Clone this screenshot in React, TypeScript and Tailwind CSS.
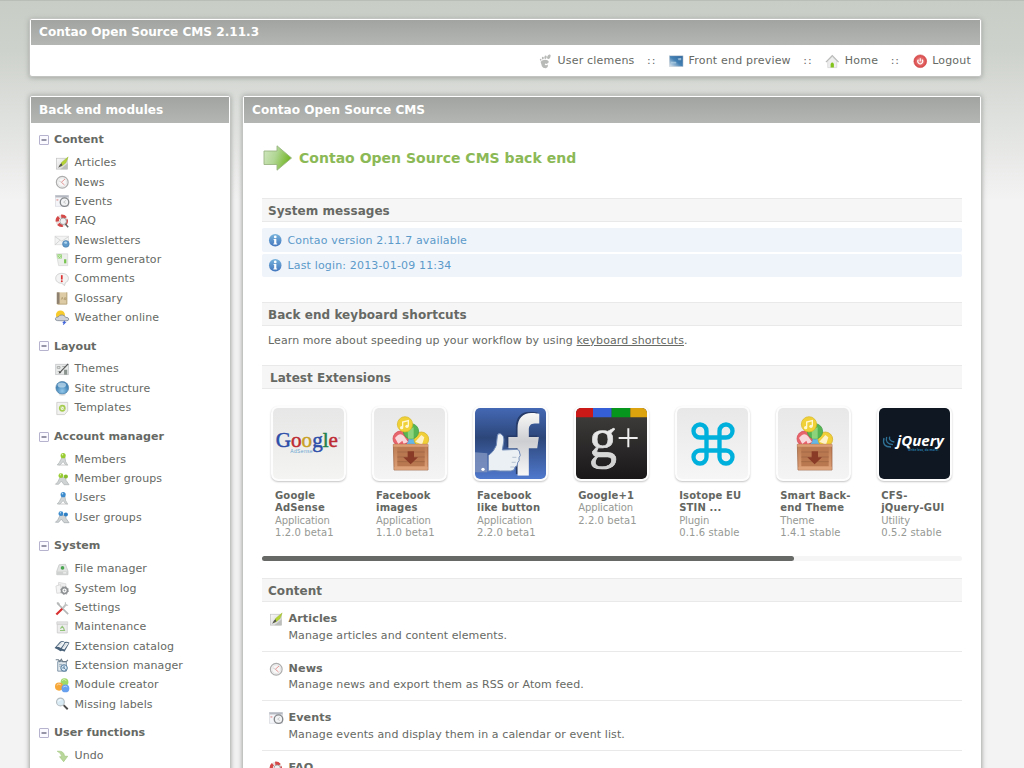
import type { ReactNode } from 'react';
import { FaFacebookF } from 'react-icons/fa';
import { Command } from 'lucide-react';

const icons: Record<string, ReactNode> = {
  articles: (
    <>
      <rect x="1.5" y="2.5" width="12" height="12" fill="url(#paper)" stroke="#c2c4c2" strokeWidth=".8" />
      <path d="M6 14.500 14 14.500 14 8z" fill="#bcbebc" />
      <path d="M5 11.500 7.500 7 14.500 1 12 7.500 7.500 11z" fill="#b5d334" stroke="#96b52c" strokeWidth=".5" />
      <path d="M3.500 13 5.500 9.500 7.500 8 8 10.500z" fill="#555" />
    </>
  ),
  news: (
    <>
      <circle cx="8" cy="8" r="6.500" fill="#f7f7f7" stroke="#adadad" strokeWidth="1.300" />
      <circle cx="8" cy="8" r="4.800" fill="none" stroke="#dedede" strokeWidth=".8" />
      <path d="M11 4.500 7 8 10.500 11" fill="none" stroke="#e58b8b" strokeWidth="1" />
      <path d="M4.500 6.500 7 8" stroke="#ccc" />
    </>
  ),
  events: (
    <>
      <rect x=".5" y="1.500" width="14.500" height="12" fill="#f4f5f8" stroke="#d3d6dc" strokeWidth=".7" />
      <path d="M.5 1.500h14.500v2.300H.5z" fill="#b5b9c1" />
      <path d="M2.500 5.500v2M4 6.500H1.500" stroke="#e3a9a9" />
      <circle cx="10.500" cy="9" r="4.700" fill="#f2f3f4" stroke="#85888b" strokeWidth="1.500" />
      <path d="M12 7 9.500 9 12 10.500" fill="none" stroke="#bbb" strokeWidth=".8" />
    </>
  ),
  faq: (
    <>
      <circle cx="7.500" cy="7.500" r="5" fill="none" stroke="#e9dfdf" strokeWidth="3.600" />
      <circle cx="7.500" cy="7.500" r="5" fill="none" stroke="#d54848" strokeWidth="3.600" strokeDasharray="5 2.854" strokeDashoffset="-1.400" transform="rotate(-30 7.500 7.500)" />
      <circle cx="9" cy="8" r="3.600" fill="#eef0f1" stroke="#999" strokeWidth=".9" />
      <path d="m11.500 11 3 3.700" stroke="#666" strokeWidth="1.700" />
    </>
  ),
  newsletters: (
    <>
      <rect x="0" y="3.500" width="15" height="9.500" fill="#f3f3f3" stroke="#dadada" strokeWidth=".8" />
      <path d="m0 4 7.500 5 7.500-5M0 13l5.500-5" fill="none" stroke="#c9cbcb" strokeWidth=".8" />
      <circle cx="12" cy="12" r="3.700" fill="#5f9acb" stroke="#4479a8" strokeWidth=".6" />
      <path d="M9.500 11q2-2.500 4-.8l-1 2z" fill="#b5d7ee" />
    </>
  ),
  form: (
    <>
      <path d="M1.500 2h12.500v13H4z" fill="#eceeec" stroke="#cfd1cf" strokeWidth=".7" />
      <path d="M2.500 2.500h5v4.800h-4.500z" fill="#8fd16e" />
      <path d="m3.500 3 3 3.500M6.500 3 3.500 6.500" stroke="#d6efc9" />
      <path d="M10 8h2.500v4.500h-2.500z" fill="#78c552" />
    </>
  ),
  comments: (
    <>
      <path d="M7.500 1.500C3 1.500.8 4 .8 7c0 3.300 2.800 5.500 6.700 5.500l3 2.500.8-3c2.200-1 3.500-2.600 3.500-5 0-3-2.800-5.500-7.300-5.500z" fill="#f3f3f3" stroke="#c9c9c9" strokeWidth=".9" />
      <path d="M7.500 3.500v4.800" stroke="#d33" strokeWidth="1.900" />
      <circle cx="7.500" cy="10.300" r="1.100" fill="#d33" />
    </>
  ),
  glossary: (
    <>
      <path d="M2 1.500h11.500v13H2z" fill="#dccba5" />
      <path d="M2 1.500h3v13H2z" fill="#8f8170" />
      <path d="M13 1.500v13H3" fill="none" stroke="#b6a37b" />
      <path d="m7 9.500 1-2.500 1 2.500M10.500 7.500h1.500v2h-1.500z" fill="none" stroke="#a78f61" strokeWidth=".7" />
    </>
  ),
  weather: (
    <>
      <circle cx="6" cy="5.500" r="5" fill="#f8cb2d" />
      <path d="M2.500 11.700Q0 11.500.5 9.300 1 7.500 3.500 7.700 5 5 8 5.500q3 .2 3.500 2.500 3.700 0 3.700 2 0 2-3 2z" fill="#cfd2d8" stroke="#7f8794" strokeWidth=".9" />
      <path d="m11 12-1.700 1.800h1.900L9 16" fill="none" stroke="#4669da" strokeWidth="1.200" />
    </>
  ),
  themes: (
    <>
      <rect x=".8" y="2.500" width="14" height="11.500" fill="#e8eaea" stroke="#c0c3c4" strokeWidth=".8" />
      <path d="M2.500 5h3v2h-3zM3 10.500h4M8 5h3" stroke="#999" strokeWidth=".8" fill="none" />
      <path d="m6 11 8.500-9" stroke="#555" strokeWidth="1.300" />
      <path d="m5 10 2 2-3 .8z" fill="#444" />
      <path d="M10 8.500h3.500V14H10z" fill="#8b938e" />
    </>
  ),
  site: (
    <>
      <circle cx="8" cy="7.500" r="7" fill="url(#globe)" stroke="#4f81a8" strokeWidth=".8" />
      <ellipse cx="7.500" cy="4.500" rx="4.700" ry="2.800" fill="#d2e8f5" opacity=".65" />
      <ellipse cx="8" cy="15.300" rx="4" ry=".6" fill="#ccc" />
    </>
  ),
  templates: (
    <>
      <path d="M2 1.500h12v9.500L10.500 15H2z" fill="#f1f2f0" stroke="#cbccca" strokeWidth=".9" />
      <circle cx="8" cy="8" r="2.800" fill="none" stroke="#a6cc4f" strokeWidth="1.900" />
      <path d="m5 6 6 4" stroke="#c4de82" />
    </>
  ),
  member: (
    <>
      <ellipse cx="8" cy="14.300" rx="6" ry=".8" fill="#ddd" />
      <path d="M8 5.500 4.500 12l-2 2 3 .3L9 10.500l2.500 3.500 2.500.5-2.300-4-.9-5z" fill="#d3d6d6" stroke="#b0b4b4" strokeWidth=".8" />
      <circle cx="9" cy="4" r="2.800" fill="#98cc31" />
      <circle cx="8.300" cy="2.900" r=".9" fill="#e1f3b5" />
    </>
  ),
  members: (
    <>
      <path d="M5.500 6 3 11l-2.500 2.500H4L7 10l3 4h5.500L12 9V6z" fill="#d0d3d3" stroke="#b0b4b4" strokeWidth=".8" />
      <circle cx="6.500" cy="4" r="2.700" fill="#98cc31" />
      <circle cx="12" cy="5" r="2.300" fill="#86bd2b" />
      <circle cx="6" cy="3" r=".8" fill="#e1f3b5" />
    </>
  ),
  user: (
    <>
      <ellipse cx="8" cy="14.300" rx="6" ry=".8" fill="#ddd" />
      <path d="M8 5.500 4.500 12l-2 2 3 .3L9 10.500l2.500 3.500 2.500.5-2.300-4-.9-5z" fill="#d3d6d6" stroke="#b0b4b4" strokeWidth=".8" />
      <circle cx="9" cy="4" r="2.800" fill="#3d8bcc" />
      <circle cx="8.300" cy="2.900" r=".9" fill="#b9dcf3" />
    </>
  ),
  users: (
    <>
      <path d="M5.500 6 3 11l-2.500 2.500H4L7 10l3 4h5.500L12 9V6z" fill="#d0d3d3" stroke="#a5aaae" strokeWidth=".8" />
      <circle cx="6.500" cy="4" r="2.700" fill="#3d8bcc" />
      <circle cx="12" cy="5" r="2.300" fill="#2f7fc4" />
      <circle cx="6" cy="3" r=".8" fill="#b9dcf3" />
    </>
  ),
  files: (
    <>
      <path d="m4.500 3 7-.5 2.800 7.500v4H2v-4z" fill="#e2e4e3" stroke="#c2c4c3" strokeWidth=".8" />
      <path d="M2 10.500h12.300V14H2z" fill="#cfd1d0" />
      <circle cx="8.300" cy="6.500" r="2" fill="#4ba651" />
      <path d="M9 12h3.500" stroke="#fff" />
    </>
  ),
  log: (
    <>
      <path d="m4 1.500 8 1.500v9.500H3z" fill="#eee" stroke="#d2d2d2" strokeWidth=".7" />
      <path d="M1 5.500 6 4l2 9-6 .5z" fill="#f4f4f4" stroke="#cdcdcd" strokeWidth=".7" />
      <circle cx="10.500" cy="10.500" r="3.200" fill="#fff" stroke="#8c8f91" strokeWidth="1.700" />
      <circle cx="10.500" cy="10.500" r="4.400" fill="none" stroke="#8c8f91" strokeWidth="1" strokeDasharray="1.700 1.750" />
      <circle cx="10.500" cy="10.500" r="1" fill="#9fa2a4" />
    </>
  ),
  settings: (
    <>
      <path d="m2.500 2.500 12 12" stroke="#b5b8b8" strokeWidth="1.900" />
      <path d="M2 2h2l1 2" fill="none" stroke="#aaa" />
      <path d="m8.500 8 4-4.500" stroke="#bfc1c1" strokeWidth="2.200" />
      <path d="M11.500 1.500v3l3 .2" fill="none" stroke="#c2c4c4" strokeWidth="1.300" />
      <path d="M8 8.500 1.500 15" stroke="#d83030" strokeWidth="2.400" />
    </>
  ),
  maintenance: (
    <>
      <path d="M2 2h12v2.800H2z" fill="#e7e7e7" stroke="#c7c7c7" strokeWidth=".7" />
      <path d="M2.500 4.800h11v9.500h-11z" fill="#ebeceb" stroke="#c7c8c7" strokeWidth=".8" />
      <path d="m6 9.500 2-2.500 2 2.500M5.500 11.500h5L9.500 9.500" fill="none" stroke="#91c378" strokeWidth="1.200" />
    </>
  ),
  catalog: (
    <>
      <path d="m-.5 10 6-7q3-1.500 5 .3 2.800-1 5.500.7L10.500 14q-2.700-1.500-4.500-.5-2.800-2-6.500-3.500z" fill="#49627a" />
      <path d="m1.700 8.500 5-5q2.500-1.200 4 .5L6.500 10Q4 8.300 1.700 8.500zM7.500 10.500 11.500 4.500q2-.8 3.500.2L10.300 11.500z" fill="#f0f3f5" />
      <path d="m3.500 7.500 4-3M9 9.500 13 5" stroke="#b5bec5" strokeWidth=".7" />
    </>
  ),
  manager: (
    <>
      <path d="M3 4h9.500v10.500H3z" fill="#e6ecf0" stroke="#68829a" strokeWidth=".9" />
      <path d="M.8 2h3l1.500 2L7 1.500l1.500 2.500h4l1.700-2" fill="none" stroke="#6d7c88" strokeWidth="1.200" />
      <path d="M4.500 7H8M4.500 9h2" stroke="#8aa1b3" />
      <circle cx="10" cy="11" r="3.600" fill="#dcebf5" stroke="#4c7598" strokeWidth="1.100" />
      <path d="M10 8.500V11h-2m2 0 2 2" fill="none" stroke="#4c7598" />
    </>
  ),
  creator: (
    <>
      <circle cx="10.500" cy="4.500" r="4.300" fill="#9fda66" />
      <circle cx="4.500" cy="9.500" r="4.500" fill="#f7a737" />
      <circle cx="11.500" cy="11.500" r="4.300" fill="#66a0ee" />
      <path d="M7.500 3q2.500-3 5 0M2 8q2-2.500 4.500-.5M9 10q2.500-2 4.500 0" fill="none" stroke="#fff" opacity=".6" />
    </>
  ),
  missing: (
    <>
      <path d="m9.500 9 4.500 4.500" stroke="#4d4d4d" strokeWidth="2.100" />
      <circle cx="6" cy="5.500" r="4.300" fill="#d9ecf6" stroke="#b6bdc1" strokeWidth="1.200" />
      <path d="M3.500 5q1-2.500 3.500-2" fill="none" stroke="#fff" />
    </>
  ),
  undo: (
    <path d="M2.500 2.500Q10 1.500 10.500 8H14l-4.500 6L5 8.500h2.500Q7 4.500 2.500 2.500z" fill="#b9d79a" stroke="#9fc47a" strokeWidth=".7" />
  ),
  gnome: (
    <g fill="#b8bab8">
      <path d="M2.800 8.500Q5.500 5.800 9.500 6.500q3.500 1 1.800 3.500-1.800 1.500-3.300.5-1.300.8.300 1.800 1.500.3 2.700-.8.500 3-2.200 4.300-3.300.2-4.500-2.300-.6-2.500-1.500-5z" />
      <ellipse cx="12" cy="3" rx="1.700" ry="2.700" transform="rotate(28 12 3)" />
      <ellipse cx="8.300" cy="3.600" rx="1.300" ry="1.900" transform="rotate(15 8.300 3.600)" />
      <ellipse cx="5.300" cy="4.500" rx="1.100" ry="1.500" />
      <ellipse cx="3" cy="6.300" rx=".9" ry="1.200" transform="rotate(-20 3 6.300)" />
    </g>
  ),
  preview: (
    <>
      <rect x=".3" y="2" width="15.200" height="12" fill="url(#screen)" stroke="#c9d0d6" strokeWidth=".6" />
      <path d="M2 8.500h6v2H2zM9.500 5l4-1v3h-3z" fill="#b4d1e6" opacity=".7" />
    </>
  ),
  home: (
    <>
      <path d="M3 7.500 8 3l5 4.500V15H3z" fill="#eeeeee" stroke="#cfcfcf" strokeWidth=".7" />
      <path d="M1 9 8 1.800 15 9" fill="none" stroke="#b8bab8" strokeWidth="1.300" />
      <path d="M6.200 14.800V11Q8 8 9.800 11v3.800z" fill="#83c41c" />
    </>
  ),
  logout: (
    <>
      <circle cx="8" cy="8" r="7" fill="url(#red)" stroke="#d14a4a" strokeWidth=".7" />
      <path d="M6 6.200a2.700 2.700 0 1 0 4 0M8 4.800V8" fill="none" stroke="#fff" strokeWidth="1.200" />
    </>
  ),
  info: (
    <>
      <circle cx="8" cy="8" r="6.900" fill="url(#blue)" />
      <circle cx="8" cy="4.300" r="1.500" fill="#fff" />
      <path d="M6.200 6.600h3v5h.9v1.200H5.900v-1.200h.9V7.800h-.6z" fill="#fff" />
    </>
  ),
};

function Icon({ name, className = 'mb-px' }: { name: string; className?: string }) {
  return (
    <svg viewBox="0 0 16 16" className={`size-[14.5px] shrink-0 overflow-visible ${className}`} aria-hidden="true">
      {icons[name]}
    </svg>
  );
}

function Gradients() {
  return (
    <svg className="absolute size-0" aria-hidden="true">
      <defs>
        <linearGradient id="paper" x2="1" y2="1"><stop stopColor="#fafafa" /><stop offset="1" stopColor="#cfd0cf" /></linearGradient>
        <radialGradient id="globe" cy=".75"><stop stopColor="#93c8ea" /><stop offset="1" stopColor="#4585b8" /></radialGradient>
        <linearGradient id="screen" x1="1" x2="0" y2="1"><stop stopColor="#2d659c" /><stop offset=".5" stopColor="#4380b3" /><stop offset="1" stopColor="#e2eaf1" /></linearGradient>
        <radialGradient id="red"><stop stopColor="#f09a9a" /><stop offset="1" stopColor="#d94545" /></radialGradient>
        <linearGradient id="blue" x2="0" y2="1"><stop stopColor="#78b3dc" /><stop offset="1" stopColor="#4276bd" /></linearGradient>
        <linearGradient id="arrow" x2="1" y2=".3"><stop stopColor="#d3e8c2" /><stop offset=".5" stopColor="#b0d693" /><stop offset="1" stopColor="#76b82a" /></linearGradient>
        <linearGradient id="fbBg" x2="0" y2="1"><stop stopColor="#4468b4" /><stop offset=".42" stopColor="#2c4679" /><stop offset="1" stopColor="#5079cd" /></linearGradient>
        <linearGradient id="fbF" x2="0" y2="1"><stop stopColor="#f8f8f8" /><stop offset=".45" stopColor="#cdced1" /><stop offset="1" stopColor="#f7f7f8" /></linearGradient>
        <linearGradient id="gpG" x2="0" y2="1"><stop stopColor="#fff" /><stop offset="1" stopColor="#ccc" /></linearGradient>
        <linearGradient id="gpBg" x2="0" y2="1"><stop stopColor="#42403e" /><stop offset="1" stopColor="#191718" /></linearGradient>
        <linearGradient id="wood" x2="0" y2="1"><stop stopColor="#bc7b51" /><stop offset="1" stopColor="#dca078" /></linearGradient>
      </defs>
    </svg>
  );
}

function AdSenseArt() {
  return (
    <svg viewBox="0 0 213 213" className="size-full bg-linear-to-b from-[#e6e7e6] to-[#f4f5f2]">
      <text x="8" y="118" fontFamily="'Liberation Serif', serif" fontSize="66" letterSpacing="0" textLength="187" lengthAdjust="spacingAndGlyphs" strokeWidth="1.500">
        <tspan fill="#2c4da8" stroke="#2c4da8">G</tspan><tspan fill="#bd2b32" stroke="#bd2b32">o</tspan><tspan fill="#c9a023" stroke="#c9a023">o</tspan><tspan fill="#2c4da8" stroke="#2c4da8">g</tspan><tspan fill="#228049" stroke="#228049">l</tspan><tspan fill="#bd2b32" stroke="#bd2b32">e</tspan>
      </text>
      <text x="52" y="135" fontFamily="'Liberation Sans', sans-serif" fontSize="15" fill="#69a4d0" textLength="67">AdSense</text>
      <path d="M196 90h6" stroke="#888" strokeWidth="2" />
    </svg>
  );
}

function CrateArt() {
  return (
    <svg viewBox="0 0 213 213" className="size-full bg-linear-to-b from-[#e8e8e8] to-[#f4f4f4]">
      <circle cx="111" cy="101" r="16" fill="#65b7e5" />
      <circle cx="142" cy="94" r="22" fill="#f0cf38" stroke="#cfac21" strokeWidth="2" />
      <path d="m124 101 18-20 9 7-7 22z" fill="#fff2c8" />
      <circle cx="80" cy="92" r="23" fill="#e8646c" stroke="#d0454f" strokeWidth="2" />
      <path d="M63 90q15-20 27-5l12 17-13 5-4-9-12 10z" fill="#f9d8dc" />
      <circle cx="111" cy="70" r="23" fill="#57b553" stroke="#3b983e" strokeWidth="2" />
      <path d="m101 66 18-8v34h-17z" fill="#8cd37b" />
      <circle cx="93" cy="49" r="23" fill="#f0d138" stroke="#d7b51f" strokeWidth="2" />
      <path d="M86 58V42l17-4v16" fill="none" stroke="#fff8d2" strokeWidth="4" />
      <circle cx="83" cy="59" r="5" fill="#fff8d2" /><circle cx="99" cy="55" r="5" fill="#fff8d2" />
      <path d="M58 109h104v77H60z" fill="url(#wood)" stroke="#955936" strokeWidth="2" />
      <path d="M58 109h104v7H58z" fill="#dc9f75" />
      <path d="M70 118h82v57H70z" fill="#b97850" />
      <path d="M70 132h82M70 147h82M70 161h82" stroke="#99603f" strokeWidth="2" />
      <path d="M61 176h100v9H61z" fill="#dda27a" />
      <path d="M101 130h19v18h12l-22 21-22-21h13z" fill="#8a3b28" />
    </svg>
  );
}

function FacebookArt() {
  return (
    <svg viewBox="0 0 213 213" className="size-full">
      <path d="M0 0h213v213H0z" fill="url(#fbBg)" />
      <g transform="translate(55 11) scale(.92 1)"><FaFacebookF size={188} fill="#263b69" /></g>
      <g transform="translate(60 15) scale(.92 1)"><FaFacebookF size={188} fill="url(#fbF)" /></g>
      <path d="M0 133l37 3v57H0z" fill="#7e92bd" opacity=".85" />
      <circle cx="24" cy="184" r="5" fill="#fff" />
      <path d="M40 143q17-12 24-31l3-28q1-9 9-7 13 5 10 25l-4 24 44-2q9 2 8 11 5 7-2 14 3 9-4 15 1 10-8 13 0 11-12 12H76q-21-3-36 0z" fill="#eaf0f3" stroke="#718bb8" strokeWidth="3" />
      <path d="M124 148h-12M122 163h-12M118 177h-12" stroke="#9cabc3" strokeWidth="2" />
    </svg>
  );
}

function PlusArt() {
  return (
    <svg viewBox="0 0 213 213" className="size-full">
      <path d="M0 0h213v213H0z" fill="url(#gpBg)" />
      <path d="M0 0h51v28H0z" fill="#ca1916" /><path d="M51 0h56v28H51z" fill="#355fd7" />
      <path d="M107 0h56v28h-56z" fill="#07961d" /><path d="M163 0h50v28h-50z" fill="#dda30f" />
      <text x="39" y="147" fontFamily="'Liberation Serif', serif" fontSize="171" textLength="84" lengthAdjust="spacingAndGlyphs" fill="url(#gpG)" stroke="#ddd" strokeWidth="2">g</text>
      <path d="M128 90h57M157 61v57" stroke="#eee" strokeWidth="6" />
    </svg>
  );
}

function CommandArt() {
  return (
    <div className="flex size-full items-center justify-center bg-linear-to-b from-[#e8e8e8] to-[#f6f6f6]">
      <Command className="size-[52px] text-[#00b0dc]" strokeWidth={2} />
    </div>
  );
}

function JqueryArt() {
  return (
    <svg viewBox="0 0 213 213" className="size-full bg-[#0e1722]">
      <path d="M15 90q-7 27 21 27M23 87q-6 21 19 23M32 86q-4 13 14 16" fill="none" stroke="#2f7095" strokeWidth="4" />
      <text x="53" y="115" fontFamily="'Open Sans', sans-serif" fontWeight="700" fontStyle="italic" fontSize="42" fill="#fff" textLength="142" lengthAdjust="spacingAndGlyphs">jQuery</text>
      <text x="87" y="128" fontFamily="'Open Sans', sans-serif" fontWeight="700" fontSize="10" fill="#287ca9" textLength="92" lengthAdjust="spacingAndGlyphs">write less, do more.</text>
    </svg>
  );
}

const groups: { title: string; items: [string, string][] }[] = [
  { title: 'Content', items: [['articles', 'Articles'], ['news', 'News'], ['events', 'Events'], ['faq', 'FAQ'], ['newsletters', 'Newsletters'], ['form', 'Form generator'], ['comments', 'Comments'], ['glossary', 'Glossary'], ['weather', 'Weather online']] },
  { title: 'Layout', items: [['themes', 'Themes'], ['site', 'Site structure'], ['templates', 'Templates']] },
  { title: 'Account manager', items: [['member', 'Members'], ['members', 'Member groups'], ['user', 'Users'], ['users', 'User groups']] },
  { title: 'System', items: [['files', 'File manager'], ['log', 'System log'], ['settings', 'Settings'], ['maintenance', 'Maintenance'], ['catalog', 'Extension catalog'], ['manager', 'Extension manager'], ['creator', 'Module creator'], ['missing', 'Missing labels']] },
  { title: 'User functions', items: [['undo', 'Undo'], ['member', '']] },
];

const extensions: { art: ReactNode; title: [string, string?]; kind: string; version: string }[] = [
  { art: <AdSenseArt />, title: ['Google', 'AdSense'], kind: 'Application', version: '1.2.0 beta1' },
  { art: <CrateArt />, title: ['Facebook', 'images'], kind: 'Application', version: '1.1.0 beta1' },
  { art: <FacebookArt />, title: ['Facebook', 'like button'], kind: 'Application', version: '2.2.0 beta1' },
  { art: <PlusArt />, title: ['Google+1'], kind: 'Application', version: '2.2.0 beta1' },
  { art: <CommandArt />, title: ['Isotope EU', 'STIN ...'], kind: 'Plugin', version: '0.1.6 stable' },
  { art: <CrateArt />, title: ['Smart Back-', 'end Theme'], kind: 'Theme', version: '1.4.1 stable' },
  { art: <JqueryArt />, title: ['CFS-', 'jQuery-GUI'], kind: 'Utility', version: '0.5.2 stable' },
];

const modules = [
  ['articles', 'Articles', 'Manage articles and content elements.'],
  ['news', 'News', 'Manage news and export them as RSS or Atom feed.'],
  ['events', 'Events', 'Manage events and display them in a calendar or event list.'],
  ['faq', 'FAQ', ''],
];

function PanelTitle({ children, className = 'h-[26px]' }: { children: ReactNode; className?: string }) {
  return (
    <h1 className={`flex shrink-0 items-center bg-linear-to-b from-[#a1a4a0] to-[#b3b6b2] pl-2 text-[12.1px] font-bold tracking-normal text-white ${className}`}>
      {children}
    </h1>
  );
}

function Section({ children }: { children: ReactNode }) {
  return (
    <h2 className="flex h-[24px] items-center border-y border-[#e9e9e9] bg-[#f6f6f6] pt-px pl-1.5 text-[12px] font-bold tracking-[0.05px]">
      {children}
    </h2>
  );
}

function Sep() {
  return <span className="w-[34.5px] text-center tracking-[1px]">::</span>;
}

export default function App() {
  return (
    <div className="flex h-screen w-screen flex-col overflow-hidden border-t border-[#b9beb7] bg-[#f3f3f3] bg-[linear-gradient(to_bottom,#c8cdc6_0px,#ced2cc_50px,#f3f3f3_200px)] pt-[17px] pl-[29px] font-['DejaVu_Sans',Verdana,sans-serif] text-[11px] tracking-[0.09px] whitespace-nowrap text-[#666964]">
      <Gradients />
      <header className="h-[59px] w-[953px] shrink-0 rounded-[3px] border border-[#c2c4c1] bg-white px-px pt-px shadow-[0_1px_5px_#a3a6a2]">
        <PanelTitle className="h-[25px]">Contao Open Source CMS 2.11.3</PanelTitle>
        <nav className="flex h-[31px] items-center justify-end pt-0.5 pr-[9px] tracking-[0.2px]">
          <Icon name="gnome" /><span className="ml-[5px]">User clemens</span><Sep />
          <Icon name="preview" /><span className="ml-[5px]">Front end preview</span><Sep />
          <Icon name="home" /><span className="ml-[5px]">Home</span><Sep />
          <Icon name="logout" /><span className="ml-[5px]">Logout</span>
        </nav>
      </header>
      <div className="mt-[18px] flex gap-[11px]">
        <aside className="h-[700px] w-[202px] shrink-0 rounded-t-[3px] border border-[#c2c4c1] bg-white px-px pt-px shadow-[0_0_5px_#a3a6a2]">
          <PanelTitle>Back end modules</PanelTitle>
          <div className="flex flex-col gap-[7px] pt-[4.5px]">
            {groups.map((g) => (
              <section key={g.title}>
                <h2 className="flex h-[25.3px] items-center pt-px pl-2 text-[11.1px] font-bold tracking-[0.02px]">
                  <svg viewBox="0 0 10 10" className="mr-[5px] mb-px size-[10px]" aria-hidden="true">
                    <rect x=".5" y=".5" width="9" height="9" rx=".5" fill="#fbfbff" stroke="#b5b3ce" />
                    <path d="M2.500 5h5" stroke="#54536e" strokeWidth="1.200" />
                  </svg>
                  {g.title}
                </h2>
                {g.items.map(([icon, label]) => (
                  <div key={label} className="flex h-[19.33px] items-center gap-[5px] pt-0.5 pl-6">
                    <Icon name={icon} />
                    {label}
                  </div>
                ))}
              </section>
            ))}
          </div>
        </aside>
        <main className="h-[700px] w-[740px] shrink-0 rounded-t-[3px] border border-[#c2c4c1] bg-white px-px pt-px shadow-[0_0_5px_#a3a6a2]">
          <PanelTitle>Contao Open Source CMS</PanelTitle>
          <div className="px-[18px] pt-[22px]">
            <div className="flex h-[26px] items-center gap-[6px] text-[14px] font-bold tracking-[0.02px] text-[#8bb956]">
              <svg viewBox="0 0 30 26" className="h-[26px] w-[31px]" aria-hidden="true">
                <path d="M1.500 6h13V.8L29 13 14.500 25.200V19.500h-13z" fill="url(#arrow)" stroke="#9ab581" strokeWidth=".9" />
              </svg>
              Contao Open Source CMS back end
            </div>
            <div className="mt-[27px]"><Section>System messages</Section></div>
            <div className="mt-1.5 flex flex-col gap-[2px] text-[#5c9ac9]">
              {['Contao version 2.11.7 available', 'Last login: 2013-01-09 11:34'].map((m) => (
                <p key={m} className="flex h-[23.5px] items-center gap-[5px] rounded-[2px] bg-[#eff4fb] pt-[2px] pl-1.5 tracking-[0.16px]">
                  <Icon name="info" className="mb-0.5" />
                  {m}
                </p>
              ))}
            </div>
            <div className="mt-[25px]"><Section>Back end keyboard shortcuts</Section></div>
            <p className="mt-[6px] flex h-[18px] items-center pl-1.5">
              <span>Learn more about speeding up your workflow by using <span className="underline underline-offset-1">keyboard shortcuts</span>.</span>
            </p>
            <div className="mt-[15px]"><Section><span className="pl-0.5">Latest Extensions</span></Section></div>
            <div className="mt-[17px] flex pl-[9px]">
              {extensions.map((e, i) => (
                <div key={i} className="h-[150px] w-[101.05px] shrink-0">
                  <div className="size-[75px] overflow-hidden rounded-[7px] border-2 border-[#fdfdfd] bg-white shadow-[0_1px_2px_#c4c4c4]">
                    <div className="size-full overflow-hidden rounded-[4px]">{e.art}</div>
                  </div>
                  <div className="pt-[9px] pl-1 text-[10px] leading-[12.3px] text-[#969994]">
                    <h3 className="font-bold tracking-[0.16px] text-[#636661]">{e.title[0]}{e.title[1] && <><br />{e.title[1]}</>}</h3>
                    <p className="tracking-[-0.1px]">{e.kind}</p>
                    <p className="tracking-[0.1px]">{e.version}</p>
                  </div>
                </div>
              ))}
            </div>
            <div className="h-[5px] rounded-full bg-[#f5f5f5]"><div className="h-full w-[532px] rounded-full bg-[#666965]" /></div>
            <div className="mt-[17px]"><Section>Content</Section></div>
            {modules.map(([icon, title, text]) => (
              <div key={title} className="flex h-[49.7px] gap-[5px] border-b border-[#e9e9e9] pt-[9px] pl-[7px]">
                <Icon name={icon} className="mt-px" />
                <div className="leading-[16.5px]">
                  <h3 className="text-[11.2px] font-bold">{title}</h3>
                  <p>{text}</p>
                </div>
              </div>
            ))}
          </div>
        </main>
      </div>
    </div>
  );
}
